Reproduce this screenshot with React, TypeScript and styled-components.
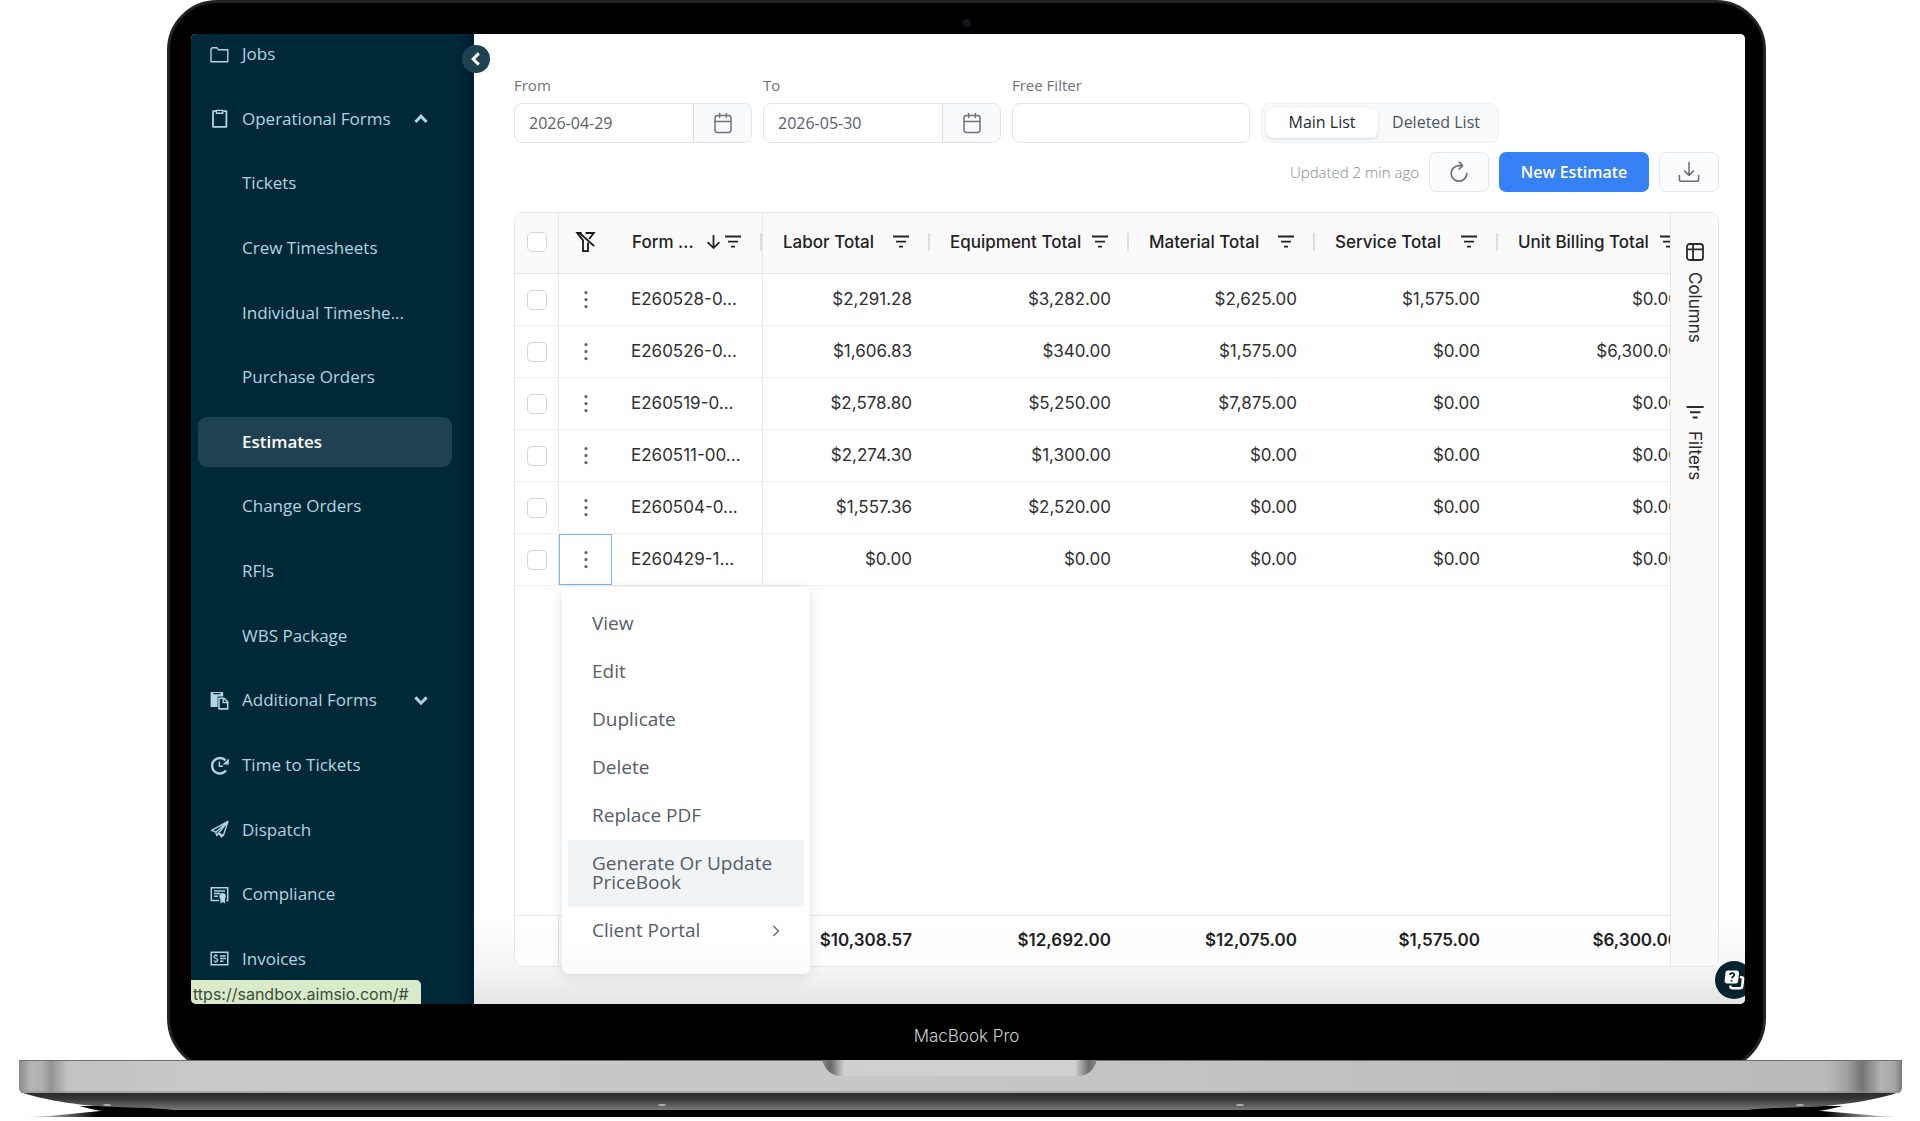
import React from "react";
import styled, { createGlobalStyle, css } from "styled-components";

const ui = `"Open Sans", "Noto Sans", sans-serif`;
const grid = `Inter, "Liberation Sans", sans-serif`;

const GlobalStyle = createGlobalStyle`
  * { box-sizing: border-box; }
  body { margin: 0; background: #fff; font-family: ${ui}; }
  button, input { font: inherit; color: inherit; }
  button { cursor: pointer; }
`;

/* ---------- laptop ---------- */

const Stage = styled.div`
  display: flex;
  flex-direction: column;
  height: 100vh;
  min-height: 1000px;
  overflow: hidden;
`;

const Lid = styled.div`
  flex: 1;
  min-height: 0;
  display: flex;
  flex-direction: column;
  margin: 0 154px -12px 167px;
  padding-bottom: 12px;
  background: #000;
  border: 3px solid #222;
  border-radius: 50px 50px 54px 54px;
`;

const CameraBar = styled.div`
  height: 31px;
  flex: none;
  display: flex;
  align-items: center;
  justify-content: center;
  padding-top: 9px;
`;

const Camera = styled.span`
  width: 8px;
  height: 8px;
  border-radius: 50%;
  background: #14161f;
  border: 1px solid #1c1c20;
`;

const Chin = styled.div`
  height: 53px;
  flex: none;
  display: flex;
  align-items: center;
  justify-content: center;
  padding-top: 11px;
  color: #cfcfcf;
  font: 300 17px/24px ${grid};
`;

const BaseArt = styled.svg`
  position: relative;
  display: block;
  flex: none;
  width: 100%;
  height: 61px;
`;

const Screen = styled.div`
  position: relative;
  flex: 1;
  min-height: 0;
  display: flex;
  margin: 0 18px 0 21px;
  overflow: hidden;
  border-radius: 5px;
  background: #fff;
`;

/* ---------- sidebar ---------- */

const Sidebar = styled.aside`
  position: relative;
  z-index: 2;
  flex: none;
  width: 283px;
  display: flex;
  background: linear-gradient(to right, #002938 0, #002938 265px, #001e2d 283px);
`;

const Nav = styled.nav`
  flex: 1;
  display: flex;
  flex-direction: column;
  justify-content: space-between;
  margin-top: -5px;
  padding: 0 22px 20px 7px;
`;

const NavItem = styled.a<{ $active?: boolean }>`
  display: flex;
  align-items: center;
  gap: 13px;
  height: 50px;
  padding: 0 24px 0 12px;
  border-radius: 9px;
  color: #b3d3e0;
  font-size: 17px;
  line-height: 24px;
  white-space: nowrap;
  text-decoration: none;
  ${(p) =>
    p.$active &&
    css`
      background: #1e4252;
      color: #fff;
      font-weight: 600;
    `}
`;

const NavIcon = styled.span`
  flex: none;
  width: 19px;
  height: 19px;
  svg { display: block; }
`;

const NavLabel = styled.span`
  flex: 1;
`;

const Collapse = styled.button`
  position: absolute;
  top: 11px;
  right: -16px;
  width: 28px;
  height: 28px;
  padding: 0;
  display: grid;
  place-items: center;
  border: 0;
  border-radius: 50%;
  background: #1e4252;
  color: #fff;
`;

const StatusUrl = styled.div`
  position: absolute;
  z-index: 3;
  left: 0;
  bottom: 0;
  height: 24px;
  padding: 0 12px 0 2px;
  border-radius: 0 5px 0 0;
  background: #d9eacb;
  color: #3c4d3a;
  font: 400 16px/28px ${grid};
`;

/* ---------- main ---------- */

const Main = styled.main`
  flex: 1;
  min-width: 0;
  display: flex;
  flex-direction: column;
  padding: 39px 26px 37px 40px;
  background: linear-gradient(to top, #e4e4e4 0, #f5f5f5 34px, #fff 90px);
`;

const Filters = styled.div`
  display: grid;
  grid-template-columns: repeat(4, 238px);
  align-items: end;
  gap: 11px;
`;

const Field = styled.div`
  display: flex;
  flex-direction: column;
  gap: 6px;
`;

const Label = styled.label`
  color: #6f7276;
  font-size: 15px;
  line-height: 24px;
`;

const Box = styled.div`
  display: flex;
  height: 40px;
  border: 1px solid #e1e5e9;
  border-radius: 8px;
  background: #fff;
  overflow: hidden;
`;

const TextInput = styled.input`
  flex: 1;
  min-width: 0;
  border: 0;
  outline: 0;
  padding: 0 14px;
  background: transparent;
  color: #5a6068;
  font-size: 16px;
`;

const CalendarButton = styled.button`
  width: 58px;
  padding: 0;
  display: grid;
  place-items: center;
  border: 0;
  border-left: 1px solid #dadfe4;
  background: #f8fafc;
  color: #6b7280;
`;

const Segmented = styled.div`
  display: grid;
  grid-template-columns: 112px 1fr;
  height: 40px;
  padding: 4px;
  border: 1px solid #eef1f4;
  border-radius: 8px;
  background: #f8fafb;
`;

const Segment = styled.button<{ $on?: boolean }>`
  padding: 0 0 2px;
  border: 0;
  border-radius: 6px;
  font-size: 16px;
  font-weight: ${(p) => (p.$on ? 500 : 400)};
  color: ${(p) => (p.$on ? "#1f2733" : "#4b5563")};
  background: ${(p) => (p.$on ? "#fff" : "transparent")};
  box-shadow: ${(p) => (p.$on ? "0 1px 3px rgba(0, 0, 0, 0.16)" : "none")};
`;

const Actions = styled.div`
  display: flex;
  align-items: center;
  justify-content: flex-end;
  gap: 10px;
  margin: 9px 0 20px;
`;

const Updated = styled.span`
  color: #84888d;
  font-size: 15px;
  font-weight: 300;
`;

const IconButton = styled.button`
  width: 60px;
  height: 40px;
  padding: 0;
  display: grid;
  place-items: center;
  border: 1px solid #e3e7eb;
  border-radius: 7px;
  background: #fafbfc;
  color: #6b7078;
`;

const Primary = styled.button`
  width: 150px;
  height: 40px;
  padding: 0;
  border: 0;
  border-radius: 7px;
  background: #3781f6;
  color: #fff;
  font-size: 16px;
  font-weight: 600;
`;

/* ---------- data grid ---------- */

const GridShell = styled.section`
  position: relative;
  flex: 1;
  min-height: 0;
  display: flex;
  border: 1px solid #e4e6e8;
  border-radius: 9px;
  background: rgba(255, 255, 255, 0.7);
`;

const Scroller = styled.div`
  flex: 1;
  min-width: 0;
  overflow: hidden;
  border-radius: 8px 0 0 8px;
`;

const Table = styled.table`
  table-layout: fixed;
  width: 1182px;
  height: 100%;
  border-collapse: separate;
  border-spacing: 0;
  font-family: ${grid};
  font-size: 17px;
  line-height: 24px;
  color: #303030;
`;

const cellEdge = css<{ $edge?: boolean }>`
  border-right: ${(p) => (p.$edge ? "1px solid #e7e8ea" : "0")};
`;

const HeadCell = styled.th<{ $edge?: boolean }>`
  height: 61px;
  padding: 0 0 2px 20px;
  text-align: left;
  font-weight: 500;
  color: #222;
  background: #fafafa;
  border-bottom: 1px solid #e4e5e7;
  ${cellEdge}
`;

const HeadInner = styled.div`
  display: flex;
  align-items: center;
  justify-content: space-between;
  white-space: nowrap;
`;

const HeadTools = styled.span`
  display: flex;
  align-items: center;
  gap: 3px;
  svg { display: block; }
`;

const Divider = styled.span`
  width: 2px;
  height: 18px;
  margin-left: 15px;
  background: #dcdddf;
`;

const IconHead = styled(HeadCell)`
  padding: 0 0 2px;
  text-align: center;
  svg, input { display: block; margin: 0 auto; }
`;

const Cell = styled.td<{ $edge?: boolean; $num?: boolean }>`
  height: 52px;
  padding: ${(p) => (p.$num ? "0 18px 2px 0" : "0 0 2px 19px")};
  text-align: ${(p) => (p.$num ? "right" : "left")};
  white-space: nowrap;
  border-bottom: 1px solid #eeeff0;
  ${cellEdge}
`;

const IconCell = styled(Cell)<{ $focus?: boolean }>`
  padding: 0;
  input { display: block; margin: 0 auto; }
  ${(p) => p.$focus && css`box-shadow: inset 0 0 0 1px #7fb5e8;`}
`;

const Check = styled.input`
  appearance: none;
  width: 20px;
  height: 20px;
  border: 1px solid #d2d4d6;
  border-radius: 5px;
  background: #fff;
`;

const RowMenuButton = styled.button`
  display: grid;
  place-items: center;
  width: 100%;
  height: 100%;
  padding: 0;
  border: 0;
  background: none;
  color: #5d6670;
`;

const Spacer = styled.td`
  border-bottom: 1px solid #e4e5e7;
`;

const TotalCell = styled(Cell)`
  height: 50px;
  border-bottom: 0;
  font-weight: 600;
  color: #1f1f1f;
`;

const SideTools = styled.div`
  flex: none;
  width: 48px;
  display: flex;
  flex-direction: column;
  align-items: center;
  gap: 62px;
  padding-top: 30px;
  border-left: 1px solid #e4e6e8;
  border-radius: 0 8px 8px 0;
  background: rgba(249, 249, 249, 0.8);
`;

const SideTool = styled.button`
  display: flex;
  align-items: center;
  gap: 11px;
  padding: 0;
  border: 0;
  background: none;
  writing-mode: vertical-rl;
  color: #2a2a2a;
  font: 400 17px/24px ${grid};
  svg { display: block; }
`;

/* ---------- context menu ---------- */

const Menu = styled.div`
  position: absolute;
  top: 374px;
  left: 47px;
  width: 248px;
  padding: 13px 6px 19px;
  border-radius: 0 6px 7px 7px;
  background: linear-gradient(#fff 0, #fff 90%, #fbfbfb 100%);
  box-shadow: 0 2px 14px rgba(0, 0, 0, 0.12);
`;

const MenuItem = styled.button<{ $hover?: boolean }>`
  display: flex;
  align-items: center;
  justify-content: space-between;
  width: 100%;
  padding: 14px 24px 15px 19px;
  border: 0;
  background: ${(p) => (p.$hover ? "#f1f4f6" : "transparent")};
  padding-left: 24px;
  color: #565c66;
  font-size: 19px;
  line-height: 19px;
  text-align: left;
`;

const Help = styled.button`
  position: absolute;
  z-index: 3;
  right: -8px;
  bottom: 5px;
  width: 38px;
  height: 38px;
  padding: 0;
  display: grid;
  place-items: center;
  border: 0;
  border-radius: 50%;
  background: #04222f;
`;

/* ---------- icons ---------- */

const Folder = () => (
  <svg width="19" height="19" viewBox="0 0 19 19" fill="none" stroke="currentColor" strokeWidth="1.4" strokeLinejoin="round">
    <path d="M1 4.2 2.2 2.7h4.6l1.5 2h9.5v12H1z" />
  </svg>
);
const Clipboard = () => (
  <svg width="19" height="19" viewBox="0 0 19 19" fill="none" stroke="currentColor" strokeWidth="1.8" strokeLinejoin="round">
    <path d="M6 2.2H3v15.6h13.4V2.2h-3" />
    <path d="M6.4 1.4h6.4v2.8H6.4z" strokeWidth="1.4" />
  </svg>
);
const Paste = () => (
  <svg width="19" height="19" viewBox="0 0 19 19" fill="currentColor">
    <path fillRule="evenodd" d="M.6 1h12.6v4.4H7.6V16H.6zM3.4 2.1v1.1h7V2.1z" />
    <path d="M9 7.2h5l3.7 3.7v7H9z" fill="none" stroke="currentColor" strokeWidth="1.6" strokeLinejoin="round" />
    <path d="M13.2 7.2v4.4h4.4" fill="none" stroke="currentColor" strokeWidth="1.4" />
  </svg>
);
const TimeIcon = () => (
  <svg width="19" height="19" viewBox="0 0 19 19" fill="none" stroke="currentColor">
    <path d="M16 14.6A7.8 7.8 0 1 1 15.6 4.4" strokeWidth="2.4" />
    <path d="M18.8 2.4v6.2h-6.2z" fill="currentColor" stroke="none" />
    <path d="M9.4 5.6v4.6h3.6" strokeWidth="1.5" />
  </svg>
);
const Plane = () => (
  <svg width="19" height="19" viewBox="0 0 19 19" fill="none" stroke="currentColor" strokeWidth="1.4" strokeLinejoin="round">
    <path d="M18 1.4 1.6 10.4l4.2 1.8zM18 1.4 8.4 13.2l5 2.3zM18 1.4 5.8 12.2l1 3.4 1.6-2.4M8.6 13.4 11.6 17l1-2" />
  </svg>
);
const Certificate = () => (
  <svg width="19" height="19" viewBox="0 0 19 19" fill="none" stroke="currentColor" strokeWidth="1.5">
    <path d="M9 15.4H1.3V2.8h16.4v12.6h-1.4M4 6h11M4 8.6h6M4 11.2h4" />
    <circle cx="12.6" cy="11.2" r="3.2" fill="currentColor" stroke="none" />
    <path d="M10.4 13h4.6v5.6l-2.3-1.5-2.3 1.5z" fill="currentColor" stroke="none" />
  </svg>
);
const Invoice = () => (
  <svg width="19" height="19" viewBox="0 0 19 19" fill="none" stroke="currentColor" strokeWidth="1.5">
    <path d="M1.2 3.3h16.6v12.4H1.2zM10 7h5.8M10 9.6h5.8M10 12.2h3.4" />
    <path d="M7.6 7.2C6.6 6.2 4 6.3 4 7.9c0 1.8 3.8 1.2 3.8 3.1 0 1.6-2.8 1.8-4 .6M5.9 5v1.4M5.9 12.4v1.5" strokeWidth="1.3" />
  </svg>
);
const Chevron = ({ d }: { d: string }) => (
  <svg width="14" height="14" viewBox="0 0 14 14" fill="none" stroke="currentColor" strokeWidth="3">
    <path d={d} />
  </svg>
);
const Calendar = () => (
  <svg width="20" height="22" viewBox="0 0 20 22" fill="none" stroke="currentColor" strokeWidth="1.5" strokeLinecap="round">
    <rect x="2" y="3.4" width="16" height="17" rx="2.6" />
    <path d="M2.4 9.6h15.2M6.6 1.4v4.2M13.4 1.4v4.2" />
  </svg>
);
const Refresh = () => (
  <svg width="22" height="24" viewBox="0 0 22 24" fill="none" stroke="currentColor" strokeWidth="1.7" strokeLinecap="round" strokeLinejoin="round">
    <path d="M14 5.6H11A7.8 7.8 0 1 0 18.8 13.4" />
    <path d="M11.4 2.200 14.600 5.600 11.200 9" />
  </svg>
);
const Download = () => (
  <svg width="22" height="22" viewBox="0 0 22 22" fill="none" stroke="currentColor" strokeWidth="1.6" strokeLinecap="round" strokeLinejoin="round">
    <path d="M11 1.6v12.6M6.6 10l4.4 4.4 4.4-4.4M1.4 14.6v3.8c0 1 .8 1.8 1.8 1.8h15.6c1 0 1.8-.8 1.8-1.8v-3.8" />
  </svg>
);
const FilterLines = () => (
  <svg width="18" height="16" viewBox="0 0 18 16" fill="none" stroke="currentColor" strokeWidth="1.8">
    <path d="M1 2.5h16M4 7.6h10M7 12.7h4" />
  </svg>
);
const SortDown = () => (
  <svg width="15" height="16" viewBox="0 0 15 16" fill="none" stroke="currentColor" strokeWidth="1.8">
    <path d="M7.5 1v13M1.6 8.2l5.9 5.9 5.9-5.9" />
  </svg>
);
const FilterOff = () => (
  <svg width="21" height="22" viewBox="0 0 21 22" fill="none" stroke="#161616" strokeWidth="1.8">
    <path d="M6.6 2H2.2L8 9.400V20.200h5V11.400" />
    <path d="M10.600 2h8.200L14.200 8" />
    <path d="M4.600 2 19.200 15.200" />
  </svg>
);
const Dots = () => (
  <svg width="6" height="20" viewBox="0 0 6 20" fill="currentColor">
    <circle cx="3" cy="2.6" r="1.6" />
    <circle cx="3" cy="9.6" r="1.6" />
    <circle cx="3" cy="16.6" r="1.6" />
  </svg>
);
const ColumnsIcon = () => (
  <svg width="18" height="18" viewBox="0 0 18 18" fill="none" stroke="currentColor" strokeWidth="1.8">
    <rect x="1" y="1" width="16" height="16" rx="2.6" />
    <path d="M1 6.4h16M7 1v16" />
  </svg>
);
const FiltersIcon = () => (
  <svg width="18" height="15" viewBox="0 0 18 15" fill="none" stroke="currentColor" strokeWidth="2">
    <path d="M.6 2h17M4 7.2h10.4M6.6 12.4h5" />
  </svg>
);
const HelpIcon = () => (
  <svg width="22" height="22" viewBox="0 0 22 22" fill="none">
    <path d="M18 8.2h.4c1 0 1.7.8 1.6 1.8l-.8 7.4c-.1 1-1 1.8-2 1.8H9.4c-1 0-1.8-.6-1.9-1.6" stroke="#fff" strokeWidth="2.6" strokeLinecap="round" />
    <path d="M5 1.4h8.8c1.3 0 2.3 1 2.2 2.3l-.8 8.6c-.1 1.2-1.1 2.1-2.3 2.1H3.8c-1.3 0-2.3-1-2.2-2.3l.9-8.6c.1-1.2 1.2-2.1 2.5-2.1z" fill="#fff" />
    <path d="M6.8 5.8c.4-2.2 4.8-2.2 4.5.2-.2 1.5-2.3 1.5-2.4 3.2M8.6 11v1.5" stroke="#04222f" strokeWidth="1.8" />
  </svg>
);

const UP = "M1.4 10 7 4.2 12.6 10";
const DOWN = "M1.4 4.4 7 10.2 12.6 4.4";
const LEFT = "M9.8 1.4 4.2 7 9.8 12.6";

/* ---------- data ---------- */

const navItems: { label: string; icon?: React.ReactNode; chevron?: string; active?: boolean }[] = [
  { label: "Jobs", icon: <Folder /> },
  { label: "Operational Forms", icon: <Clipboard />, chevron: UP },
  { label: "Tickets" },
  { label: "Crew Timesheets" },
  { label: "Individual Timeshe..." },
  { label: "Purchase Orders" },
  { label: "Estimates", active: true },
  { label: "Change Orders" },
  { label: "RFIs" },
  { label: "WBS Package" },
  { label: "Additional Forms", icon: <Paste />, chevron: DOWN },
  { label: "Time to Tickets", icon: <TimeIcon /> },
  { label: "Dispatch", icon: <Plane /> },
  { label: "Compliance", icon: <Certificate /> },
  { label: "Invoices", icon: <Invoice /> },
];

const columns = [
  { title: "Labor Total", width: 167 },
  { title: "Equipment Total", width: 199 },
  { title: "Material Total", width: 186 },
  { title: "Service Total", width: 183 },
  { title: "Unit Billing Total", width: 199 },
];

const rows = [
  ["E260528-0...", "$2,291.28", "$3,282.00", "$2,625.00", "$1,575.00", "$0.00"],
  ["E260526-0...", "$1,606.83", "$340.00", "$1,575.00", "$0.00", "$6,300.00"],
  ["E260519-0...", "$2,578.80", "$5,250.00", "$7,875.00", "$0.00", "$0.00"],
  ["E260511-00...", "$2,274.30", "$1,300.00", "$0.00", "$0.00", "$0.00"],
  ["E260504-0...", "$1,557.36", "$2,520.00", "$0.00", "$0.00", "$0.00"],
  ["E260429-1...", "$0.00", "$0.00", "$0.00", "$0.00", "$0.00"],
];

const totals = ["$10,308.57", "$12,692.00", "$12,075.00", "$1,575.00", "$6,300.00"];

const menuItems = ["View", "Edit", "Duplicate", "Delete", "Replace PDF", "Generate Or Update PriceBook", "Client Portal"];

/* ---------- parts ---------- */

const DateField = ({ id, label, value }: { id: string; label: string; value: string }) => (
  <Field>
    <Label htmlFor={id}>{label}</Label>
    <Box>
      <TextInput id={id} type="text" defaultValue={value} />
      <CalendarButton type="button" aria-label={`Pick ${label} date`}>
        <Calendar />
      </CalendarButton>
    </Box>
  </Field>
);

const EstimatesTable = () => (
  <Table>
    <colgroup>
      <col style={{ width: 44 }} />
      <col style={{ width: 53 }} />
      <col style={{ width: 151 }} />
      {columns.map((c) => (
        <col key={c.title} style={{ width: c.width }} />
      ))}
    </colgroup>
    <thead>
      <tr>
        <IconHead $edge>
          <Check type="checkbox" aria-label="Select all" />
        </IconHead>
        <IconHead>
          <FilterOff />
        </IconHead>
        <HeadCell $edge>
          <HeadInner>
            Form ...
            <HeadTools>
              <SortDown />
              <FilterLines />
              <Divider />
            </HeadTools>
          </HeadInner>
        </HeadCell>
        {columns.map((c) => (
          <HeadCell key={c.title}>
            <HeadInner>
              {c.title}
              <HeadTools>
                <FilterLines />
                <Divider />
              </HeadTools>
            </HeadInner>
          </HeadCell>
        ))}
      </tr>
    </thead>
    <tbody>
      {rows.map(([form, ...amounts], i) => (
        <tr key={form}>
          <IconCell $edge>
            <Check type="checkbox" aria-label={`Select ${form}`} />
          </IconCell>
          <IconCell $focus={i === rows.length - 1}>
            <RowMenuButton type="button" aria-label={`Actions for ${form}`}>
              <Dots />
            </RowMenuButton>
          </IconCell>
          <Cell $edge>{form}</Cell>
          {amounts.map((a, j) => (
            <Cell key={j} $num>
              {a}
            </Cell>
          ))}
        </tr>
      ))}
      <tr>
        <Spacer colSpan={8} />
      </tr>
    </tbody>
    <tfoot>
      <tr>
        <TotalCell $edge />
        <TotalCell />
        <TotalCell $edge />
        {totals.map((t, j) => (
          <TotalCell key={j} $num>
            {t}
          </TotalCell>
        ))}
      </tr>
    </tfoot>
  </Table>
);

const LaptopBase = () => (
  <BaseArt viewBox="0 0 1920 61" preserveAspectRatio="none" aria-hidden="true">
    <defs>
      <linearGradient id="deck" x1="19" x2="1902" y1="0" y2="0" gradientUnits="userSpaceOnUse">
        <stop offset="0" stopColor="#8a8a8a" />
        <stop offset="0.006" stopColor="#b4b4b4" />
        <stop offset="0.012" stopColor="#b0b0b0" />
        <stop offset="0.017" stopColor="#939393" />
        <stop offset="0.026" stopColor="#c2c2c2" />
        <stop offset="0.1" stopColor="#c9c9c9" />
        <stop offset="0.5" stopColor="#c6c6c6" />
        <stop offset="0.96" stopColor="#b9b9b9" />
        <stop offset="0.97" stopColor="#a4a4a4" />
        <stop offset="0.979" stopColor="#757575" />
        <stop offset="0.989" stopColor="#b4b4b4" />
        <stop offset="0.996" stopColor="#a6a6a6" />
        <stop offset="1" stopColor="#7c7c7c" />
      </linearGradient>
      <linearGradient id="under" x1="0" x2="0" y1="0" y2="1">
        <stop offset="0" stopColor="#262626" />
        <stop offset="0.4" stopColor="#383838" />
        <stop offset="1" stopColor="#7a7a7a" />
      </linearGradient>
      <linearGradient id="shade" x1="0" x2="1" y1="0" y2="0">
        <stop offset="0" stopColor="#000" stopOpacity="0" />
        <stop offset="0.04" stopColor="#000" />
        <stop offset="0.96" stopColor="#000" />
        <stop offset="1" stopColor="#000" stopOpacity="0" />
      </linearGradient>
      <linearGradient id="notch" x1="0" x2="1" y1="0" y2="0">
        <stop offset="0" stopColor="#8a8a8a" />
        <stop offset="0.03" stopColor="#666" />
        <stop offset="0.08" stopColor="#cfcfcf" />
        <stop offset="0.92" stopColor="#d0d0d0" />
        <stop offset="0.97" stopColor="#6c6c6c" />
        <stop offset="1" stopColor="#8a8a8a" />
      </linearGradient>
    </defs>
    <path d="M110 50H1810L1880 56 1900 57H22L50 56z" fill="url(#shade)" />
    <path d="M80 46C95 51 115 53 140 53H1780C1806 53 1825 51 1842 46z" fill="#000" />
    <path d="M20 32C45 40 80 48 170 50H1750C1840 48 1875 40 1900 32z" fill="url(#under)" />
    <path d="M80 46C120 47 160 48 174 50 160 53 120 53 80 46zM1842 46C1800 47 1764 48 1748 50 1762 53 1802 53 1842 46z" fill="#000" />
    <path d="M19 0H1902V28Q1902 33 1896 33H25Q19 33 19 28z" fill="url(#deck)" />
    <path d="M19 .5H1902" stroke="#6f6f6f" />
    <path d="M21 32H1900" stroke="#8f8f8f" />
    <path d="M822 0H1097C1094 10 1088 16 1077 16H842C831 16 825 10 822 0z" fill="url(#notch)" />
    <g fill="#b0b0b0">
      <ellipse cx="107" cy="45" rx="4" ry="1" />
      <ellipse cx="662" cy="45" rx="4" ry="1" />
      <ellipse cx="1240" cy="45" rx="4" ry="1" />
      <ellipse cx="1800" cy="45" rx="4" ry="1" />
    </g>
  </BaseArt>
);

export default function App() {
  return (
    <Stage>
      <GlobalStyle />
      <Lid>
        <CameraBar>
          <Camera />
        </CameraBar>
        <Screen>
          <Sidebar>
            <Nav>
              {navItems.map((n) => (
                <NavItem key={n.label} href="#" $active={n.active}>
                  <NavIcon>{n.icon}</NavIcon>
                  <NavLabel>{n.label}</NavLabel>
                  {n.chevron && <Chevron d={n.chevron} />}
                </NavItem>
              ))}
            </Nav>
            <Collapse type="button" aria-label="Collapse sidebar">
              <Chevron d={LEFT} />
            </Collapse>
          </Sidebar>
          <Main>
            <Filters>
              <DateField id="from" label="From" value="2026-04-29" />
              <DateField id="to" label="To" value="2026-05-30" />
              <Field>
                <Label htmlFor="free">Free Filter</Label>
                <Box>
                  <TextInput id="free" type="text" />
                </Box>
              </Field>
              <Segmented>
                <Segment type="button" $on>
                  Main List
                </Segment>
                <Segment type="button">Deleted List</Segment>
              </Segmented>
            </Filters>
            <Actions>
              <Updated>Updated 2 min ago</Updated>
              <IconButton type="button" aria-label="Refresh">
                <Refresh />
              </IconButton>
              <Primary type="button">New Estimate</Primary>
              <IconButton type="button" aria-label="Download">
                <Download />
              </IconButton>
            </Actions>
            <GridShell>
              <Scroller>
                <EstimatesTable />
              </Scroller>
              <SideTools>
                <SideTool type="button">
                  <ColumnsIcon />
                  Columns
                </SideTool>
                <SideTool type="button">
                  <FiltersIcon />
                  Filters
                </SideTool>
              </SideTools>
              <Menu role="menu">
                {menuItems.map((m) => (
                  <MenuItem key={m} type="button" role="menuitem" $hover={m.startsWith("Generate")}>
                    {m}
                    {m === "Client Portal" && (
                      <svg width="8" height="12" viewBox="0 0 8 12" fill="none" stroke="#70757d" strokeWidth="1.6">
                        <path d="M1.4 1 6.4 6 1.4 11" />
                      </svg>
                    )}
                  </MenuItem>
                ))}
              </Menu>
            </GridShell>
          </Main>
          <StatusUrl>ttps://sandbox.aimsio.com/#</StatusUrl>
          <Help type="button" aria-label="Help">
            <HelpIcon />
          </Help>
        </Screen>
        <Chin>MacBook Pro</Chin>
      </Lid>
      <LaptopBase />
    </Stage>
  );
}
